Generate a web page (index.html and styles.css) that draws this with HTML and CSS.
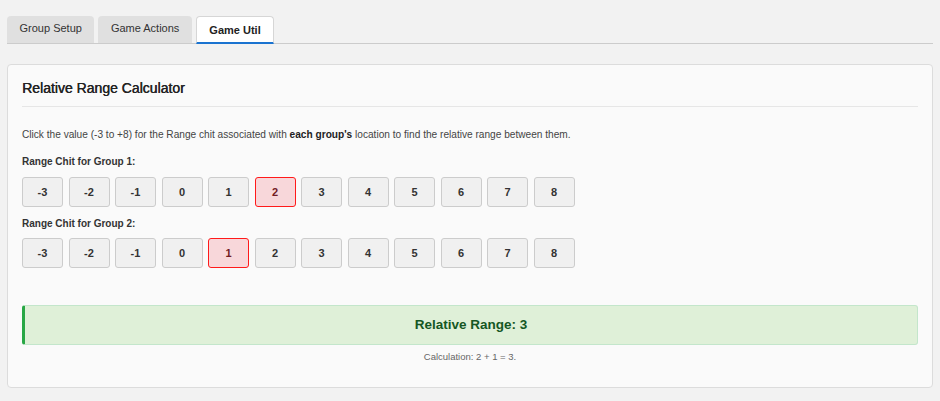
FILE: index.html
```html
<!DOCTYPE html>
<html>
<head>
<meta charset="utf-8">
<link rel="stylesheet" href="styles.css">
</head>
<body>
<div class="page">
  <div class="tabs">
    <div class="tab">Group Setup</div>
    <div class="tab">Game Actions</div>
    <div class="tab active">Game Util</div>
  </div>
  <div class="card">
    <h3 class="title">Relative Range Calculator</h3>
    <p class="intro">Click the value (-3 to +8) for the Range chit associated with <b>each group's</b> location to find the relative range between them.</p>
    <div class="label first">Range Chit for Group 1:</div>
    <div class="chits">
      <button class="chit">-3</button><button class="chit">-2</button><button class="chit">-1</button><button class="chit">0</button><button class="chit">1</button><button class="chit sel">2</button><button class="chit">3</button><button class="chit">4</button><button class="chit">5</button><button class="chit">6</button><button class="chit">7</button><button class="chit">8</button>
    </div>
    <div class="label second">Range Chit for Group 2:</div>
    <div class="chits chits2">
      <button class="chit">-3</button><button class="chit">-2</button><button class="chit">-1</button><button class="chit">0</button><button class="chit sel">1</button><button class="chit">2</button><button class="chit">3</button><button class="chit">4</button><button class="chit">5</button><button class="chit">6</button><button class="chit">7</button><button class="chit">8</button>
    </div>
    <div class="result">Relative Range: 3</div>
    <div class="calc">Calculation: 2 + 1 = 3.</div>
  </div>
</div>
</body>
</html>
```

FILE: styles.css
```css
html, body {
  margin: 0;
  padding: 0;
  background: #f2f2f2;
  font-family: "Liberation Sans", Arial, sans-serif;
  color: #333;
}
.page {
  padding: 16px 7px 0 7px;
}
.tabs {
  display: flex;
  gap: 4px;
  border-bottom: 1px solid #cccccc;
  height: 27px;
}
.tab {
  height: 27px;
  line-height: 25px;
  padding: 0 12.5px;
  background: #e0e0e0;
  border-radius: 4px 4px 0 0;
  font-size: 11px;
  color: #333;
  box-sizing: border-box;
}
.tab.active {
  background: #ffffff;
  border: 1px solid #d6d6d6;
  border-bottom: 2px solid #1a73d0;
  font-weight: bold;
  color: #222;
  line-height: 27px;
  height: 28px;
  margin-bottom: -1px;
}
.card {
  margin-top: 20px;
  background: #fafafa;
  border: 1px solid #dcdcdc;
  border-radius: 4px;
  padding: 14px 14px 14px 14px;
}
.title {
  margin: 0;
  font-size: 14px;
  line-height: 18px;
  font-weight: normal;
  color: #222;
  padding-bottom: 9px;
  border-bottom: 1px solid #e6e6e6;
  text-shadow: 0.4px 0 0 #222;
}
.intro {
  margin: 22px 0 0 0;
  font-size: 10.15px;
  line-height: 12px;
  color: #444;
}
.intro b {
  color: #222;
}
.label {
  font-size: 10px;
  line-height: 12px;
  font-weight: bold;
  color: #333;
}
.label.first { margin-top: 15px; }
.label.second { margin-top: 11px; }
.chits {
  display: flex;
  gap: 5.5px;
  margin-top: 9px;
}
.chits2 { margin-top: 8px; }
.chit {
  width: 41px;
  height: 30px;
  box-sizing: border-box;
  background: #f0f0f0;
  border: 1px solid #cccccc;
  border-radius: 3px;
  font-family: "Liberation Sans", Arial, sans-serif;
  font-size: 11px;
  font-weight: bold;
  color: #333;
  padding: 0;
}
.chit.sel {
  background: #f8d7da;
  border-color: #ff1a1a;
  color: #721c24;
}
.result {
  margin-top: 37px;
  height: 40px;
  box-sizing: border-box;
  background: #dff0d8;
  border: 1px solid #c3e6cb;
  border-left: 3px solid #28a745;
  border-radius: 3px;
  text-align: center;
  line-height: 38px;
  font-size: 13.5px;
  font-weight: bold;
  color: #155724;
}
.calc {
  margin-top: 6px;
  margin-bottom: 10px;
  text-align: center;
  font-size: 9.5px;
  line-height: 12px;
  color: #666;
}
```
